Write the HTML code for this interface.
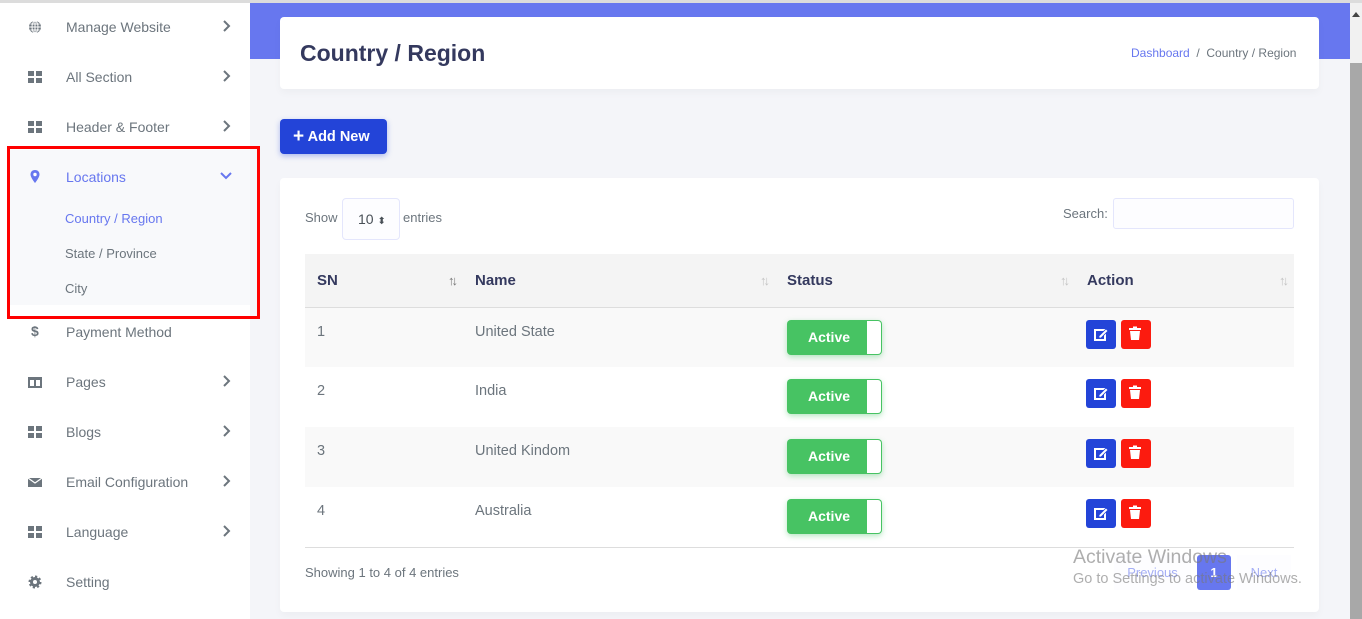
<!DOCTYPE html>
<html><head><meta charset="utf-8"><style>
*{box-sizing:border-box;margin:0;padding:0}
html,body{width:1362px;height:619px;overflow:hidden}
body{background:#f4f5f9;font-family:"Liberation Sans",sans-serif;position:relative;color:#6c757d}
.abs{position:absolute}
#topline{left:0;top:0;width:1362px;height:3px;background:#dcdcdc}
#side{left:0;top:3px;width:250px;height:616px;background:#fff}
.mi{position:absolute;left:0;width:250px;height:20px;font-size:14px;color:#6c757d}
.mi .ic{position:absolute;left:28px;top:3px;width:14px;height:14px}
.mi .tx{position:absolute;left:66px;top:2px}
.mi .ch{position:absolute;left:221px;top:3px;width:10px;height:12px}
#banner{left:250px;top:3px;width:1100px;height:56px;background:#6777ef}
#scroll{left:1350px;top:3px;width:12px;height:616px;background:#f1f1f1}
.card{background:#fff;border-radius:4px;box-shadow:0 4px 8px rgba(0,0,0,.03)}
table{border-collapse:collapse;width:989px}
th{height:53px;background:#f4f4f4;text-align:left;font-size:15px;color:#34395e;padding-left:12px;border-bottom:1px solid #ddd;position:relative}
th .s{position:absolute;right:8px;top:19px;font-size:13px;color:#c4c4c4;letter-spacing:-3px;font-weight:normal}
td{height:60px;font-size:14.5px;color:#6c757d;padding-left:12px;vertical-align:top;padding-top:16px}
tr.g td{background:#f9f9f9}
.tog{width:95px;height:35px;background:#47c363;border-radius:4px;position:relative;color:#fff;font-weight:bold;font-size:14px;line-height:35px;padding-left:21px;margin-top:-4px;box-shadow:0 2px 6px rgba(71,195,99,.4)}
.tog:after{content:"";position:absolute;right:1px;top:1px;width:14px;height:33px;background:#fff;border-radius:0 3px 3px 0}
.btn{display:inline-block;width:30px;height:29px;border-radius:3px;margin-top:-4px;vertical-align:top;position:relative}
</style></head><body>
<div id="topline" class="abs"></div>
<div id="side" class="abs"></div>
<div class="abs" style="left:10px;top:150px;width:240px;height:155px;background:#f8f9fb"></div>

<div class="mi" style="top:17px"><svg class="ic" viewBox="0 0 14 14"><circle cx="7" cy="7" r="6" fill="#6c757d"/><path d="M1 7h12M7 1v12M2.5 4h9M2.5 10h9" stroke="#fff" stroke-width="1"/><ellipse cx="7" cy="7" rx="3" ry="6" fill="none" stroke="#fff" stroke-width="1"/></svg><span class="tx">Manage Website</span><svg class="ch" viewBox="0 0 10 12"><path d="M3 1l5 5-5 5" fill="none" stroke="#6c757d" stroke-width="2"/></svg></div>
<div class="mi" style="top:67px"><svg class="ic" viewBox="0 0 14 14"><path d="M0 1h6v5H0zM8 1h6v5H8zM0 8h6v5H0zM8 8h6v5H8z" fill="#6c757d"/></svg><span class="tx">All Section</span><svg class="ch" viewBox="0 0 10 12"><path d="M3 1l5 5-5 5" fill="none" stroke="#6c757d" stroke-width="2"/></svg></div>
<div class="mi" style="top:117px"><svg class="ic" viewBox="0 0 14 14"><path d="M0 1h6v5H0zM8 1h6v5H8zM0 8h6v5H0zM8 8h6v5H8z" fill="#6c757d"/></svg><span class="tx">Header &amp; Footer</span><svg class="ch" viewBox="0 0 10 12"><path d="M3 1l5 5-5 5" fill="none" stroke="#6c757d" stroke-width="2"/></svg></div>
<div class="mi" style="top:167px;color:#6777ef"><svg class="ic" viewBox="0 0 14 14" style="left:29px"><path d="M6 0C3 0 1.5 2 1.5 4.5 1.5 7.5 6 13 6 13s4.5-5.5 4.5-8.5C10.5 2 9 0 6 0z" fill="#6777ef"/><circle cx="6" cy="4.5" r="1.7" fill="#fff"/></svg><span class="tx">Locations</span><svg class="ch" viewBox="0 0 12 12" style="width:12px;left:220px"><path d="M1 3l5 5 5-5" fill="none" stroke="#6777ef" stroke-width="2"/></svg></div>
<div class="abs" style="left:65px;top:211px;font-size:13px;color:#6777ef">Country / Region</div>
<div class="abs" style="left:65px;top:246px;font-size:13px;color:#6c757d">State / Province</div>
<div class="abs" style="left:65px;top:281px;font-size:13px;color:#6c757d">City</div>
<div class="abs" style="left:7px;top:146px;width:253px;height:173px;border:3px solid #ff0000"></div>

<div class="mi" style="top:322px"><span class="ic" style="font-weight:bold;color:#6c757d;top:1px;left:31px">$</span><span class="tx">Payment Method</span></div>
<div class="mi" style="top:372px"><svg class="ic" viewBox="0 0 14 14"><path d="M0 2h14v11H0z" fill="#6c757d"/><path d="M2 5h4v6H2zM8 5h4v6H8z" fill="#fff"/></svg><span class="tx">Pages</span><svg class="ch" viewBox="0 0 10 12"><path d="M3 1l5 5-5 5" fill="none" stroke="#6c757d" stroke-width="2"/></svg></div>
<div class="mi" style="top:422px"><svg class="ic" viewBox="0 0 14 14"><path d="M0 1h6v5H0zM8 1h6v5H8zM0 8h6v5H0zM8 8h6v5H8z" fill="#6c757d"/></svg><span class="tx">Blogs</span><svg class="ch" viewBox="0 0 10 12"><path d="M3 1l5 5-5 5" fill="none" stroke="#6c757d" stroke-width="2"/></svg></div>
<div class="mi" style="top:472px"><svg class="ic" viewBox="0 0 14 14"><rect x="0" y="3" width="14" height="9" fill="#6c757d"/><path d="M0 3l7 5 7-5" stroke="#fff" stroke-width="1.2" fill="none"/></svg><span class="tx">Email Configuration</span><svg class="ch" viewBox="0 0 10 12"><path d="M3 1l5 5-5 5" fill="none" stroke="#6c757d" stroke-width="2"/></svg></div>
<div class="mi" style="top:522px"><svg class="ic" viewBox="0 0 14 14"><path d="M0 1h6v5H0zM8 1h6v5H8zM0 8h6v5H0zM8 8h6v5H8z" fill="#6c757d"/></svg><span class="tx">Language</span><svg class="ch" viewBox="0 0 10 12"><path d="M3 1l5 5-5 5" fill="none" stroke="#6c757d" stroke-width="2"/></svg></div>
<div class="mi" style="top:572px"><svg class="ic" viewBox="0 0 14 14"><circle cx="7" cy="7" r="5" fill="#6c757d" stroke="#6c757d" stroke-width="3" stroke-dasharray="2 1.9"/><circle cx="7" cy="7" r="2" fill="#fff"/></svg><span class="tx">Setting</span></div>

<div id="banner" class="abs"></div>
<div id="scroll" class="abs"><div class="abs" style="left:0;top:60px;width:12px;height:560px;background:#a8a8a8"></div><div class="abs" style="left:2px;top:9px;width:0;height:0;border:4px solid transparent;border-bottom:5px solid #444;border-top:0"></div></div>

<div class="abs card" style="left:280px;top:17px;width:1039px;height:72px"></div>
<div class="abs" style="left:300px;top:40px;font-size:23px;font-weight:bold;color:#34395e">Country / Region</div>
<div class="abs" style="left:1131px;top:46px;font-size:12px;color:#6c757d"><span style="color:#6777ef">Dashboard</span> &nbsp;/&nbsp; Country / Region</div>

<div class="abs" style="left:280px;top:119px;width:107px;height:35px;background:#2344d8;border-radius:4px;color:#fff;font-weight:bold;font-size:14.5px;line-height:35px;padding-left:13px;box-shadow:0 2px 6px rgba(35,68,216,.35)"><span style="font-size:19px;vertical-align:-1px">+</span> Add New</div>

<div class="abs card" style="left:280px;top:178px;width:1039px;height:434px"></div>
<div class="abs" style="left:305px;top:210px;font-size:13px">Show</div>
<div class="abs" style="left:342px;top:198px;width:58px;height:42px;border:1px solid #e4e6fc;border-radius:4px;background:#fdfdff;font-size:14px;color:#495057;padding:12px 0 0 15px">10 <span style="font-size:10px">⬍</span></div>
<div class="abs" style="left:403px;top:210px;font-size:13px">entries</div>
<div class="abs" style="left:1063px;top:206px;font-size:13px">Search:</div>
<div class="abs" style="left:1113px;top:198px;width:181px;height:31px;border:1px solid #e4e6fc;border-radius:3px;background:#fdfdff"></div>

<table class="abs" style="left:305px;top:254px">
<tr><th style="width:158px">SN<span class="s" style="color:#777">↑↓</span></th><th style="width:312px">Name<span class="s">↑↓</span></th><th style="width:300px">Status<span class="s">↑↓</span></th><th>Action<span class="s">↑↓</span></th></tr>
<tr class="g"><td>1</td><td>United State</td><td><div class="tog">Active</div></td><td><span class="btn" style="background:#2344d8;margin-left:-1px"><svg width="30" height="29" viewBox="0 0 30 29"><rect x="9" y="10" width="10" height="10" fill="none" stroke="#fff" stroke-width="2"/><path d="M13 16l7-7 2 2-7 7h-2z" fill="#fff" stroke="#2344d8" stroke-width=".8"/></svg></span> <span class="btn" style="background:#fc1b0f;margin-left:1px"><svg width="28" height="29" viewBox="0 0 28 29"><rect x="8" y="8" width="12" height="2" fill="#fff"/><rect x="12" y="6.5" width="4" height="2" fill="#fff"/><path d="M9 11h10l-1 9h-8z" fill="#fff"/></svg></span></td></tr>
<tr><td>2</td><td>India</td><td><div class="tog">Active</div></td><td><span class="btn" style="background:#2344d8;margin-left:-1px"><svg width="30" height="29" viewBox="0 0 30 29"><rect x="9" y="10" width="10" height="10" fill="none" stroke="#fff" stroke-width="2"/><path d="M13 16l7-7 2 2-7 7h-2z" fill="#fff" stroke="#2344d8" stroke-width=".8"/></svg></span> <span class="btn" style="background:#fc1b0f;margin-left:1px"><svg width="28" height="29" viewBox="0 0 28 29"><rect x="8" y="8" width="12" height="2" fill="#fff"/><rect x="12" y="6.5" width="4" height="2" fill="#fff"/><path d="M9 11h10l-1 9h-8z" fill="#fff"/></svg></span></td></tr>
<tr class="g"><td>3</td><td>United Kindom</td><td><div class="tog">Active</div></td><td><span class="btn" style="background:#2344d8;margin-left:-1px"><svg width="30" height="29" viewBox="0 0 30 29"><rect x="9" y="10" width="10" height="10" fill="none" stroke="#fff" stroke-width="2"/><path d="M13 16l7-7 2 2-7 7h-2z" fill="#fff" stroke="#2344d8" stroke-width=".8"/></svg></span> <span class="btn" style="background:#fc1b0f;margin-left:1px"><svg width="28" height="29" viewBox="0 0 28 29"><rect x="8" y="8" width="12" height="2" fill="#fff"/><rect x="12" y="6.5" width="4" height="2" fill="#fff"/><path d="M9 11h10l-1 9h-8z" fill="#fff"/></svg></span></td></tr>
<tr style="border-bottom:1px solid #ddd"><td>4</td><td>Australia</td><td><div class="tog">Active</div></td><td><span class="btn" style="background:#2344d8;margin-left:-1px"><svg width="30" height="29" viewBox="0 0 30 29"><rect x="9" y="10" width="10" height="10" fill="none" stroke="#fff" stroke-width="2"/><path d="M13 16l7-7 2 2-7 7h-2z" fill="#fff" stroke="#2344d8" stroke-width=".8"/></svg></span> <span class="btn" style="background:#fc1b0f;margin-left:1px"><svg width="28" height="29" viewBox="0 0 28 29"><rect x="8" y="8" width="12" height="2" fill="#fff"/><rect x="12" y="6.5" width="4" height="2" fill="#fff"/><path d="M9 11h10l-1 9h-8z" fill="#fff"/></svg></span></td></tr>
</table>

<div class="abs" style="left:305px;top:565px;font-size:13px">Showing 1 to 4 of 4 entries</div>
<div class="abs" style="left:1114px;top:555px;width:77px;height:35px;background:#fdfdff;color:#a5aff5;font-size:13px;text-align:center;line-height:35px">Previous</div>
<div class="abs" style="left:1197px;top:555px;width:34px;height:35px;background:#6777ef;border-radius:3px;color:#fff;font-size:13px;font-weight:bold;text-align:center;line-height:35px">1</div>
<div class="abs" style="left:1237px;top:555px;width:54px;height:35px;background:#fdfdff;color:#a5aff5;font-size:13px;text-align:center;line-height:35px">Next</div>
<div class="abs" style="left:1073px;top:546px;font-size:19.5px;color:rgba(120,120,120,.6)">Activate Windows</div>
<div class="abs" style="left:1073px;top:571px;font-size:14.5px;color:rgba(120,120,120,.6);white-space:nowrap">Go to Settings to activate Windows.</div>
</body></html>
